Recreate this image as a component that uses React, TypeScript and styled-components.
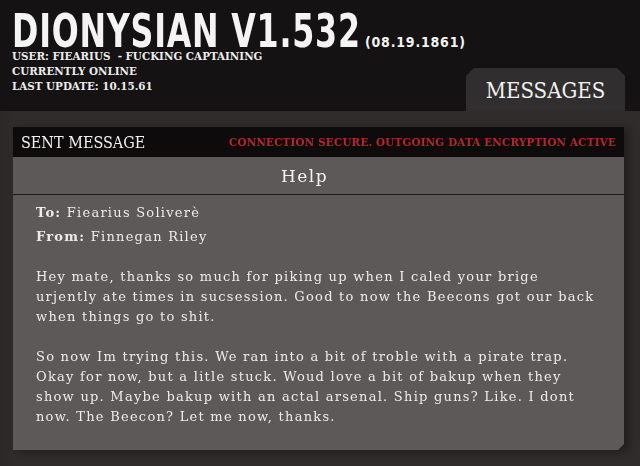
import React from "react";
import styled, { createGlobalStyle } from "styled-components";

const GlobalStyle = createGlobalStyle`
  html, body {
    margin: 0;
    padding: 0;
    background: #302c2c;
  }
  body {
    width: 640px;
    height: 466px;
    overflow: hidden;
  }
`;

const Page = styled.div`
  width: 640px;
  height: 466px;
  display: flex;
  flex-direction: column;
  background: #302c2c;
`;

const Header = styled.header`
  height: 111px;
  background: #141212;
  display: flex;
  justify-content: space-between;
  align-items: flex-end;
  padding: 0 15px 0 12px;
  box-sizing: border-box;
`;

const Brand = styled.div`
  align-self: flex-start;
  padding-top: 13px;
  min-width: 0;
`;

const TitleRow = styled.div`
  display: flex;
  align-items: baseline;
  height: 36px;
  white-space: nowrap;
`;

// the logo type is a heavy condensed face, squeezed horizontally
const Title = styled.h1`
  margin: 0;
  width: 353px;
  flex-shrink: 0;
  font-family: "DejaVu Sans", sans-serif;
  font-stretch: condensed;
  font-weight: 900;
  font-size: 46px;
  line-height: 36px;
  color: #f4f4f4;
  span {
    display: inline-block;
    letter-spacing: 1px;
    transform: scaleX(0.767);
    transform-origin: left center;
  }
`;

const Stamp = styled.span`
  font-family: "DejaVu Sans", sans-serif;
  font-stretch: condensed;
  font-weight: 900;
  font-size: 14px;
  letter-spacing: 0.8px;
  color: #f4f4f4;
`;

const InfoLine = styled.div`
  font-family: "DejaVu Serif", serif;
  font-stretch: condensed;
  font-weight: bold;
  font-size: 11.5px;
  line-height: 15px;
  color: #ececec;
  white-space: pre;
`;

const Tab = styled.div`
  flex-shrink: 0;
  width: 159px;
  height: 43px;
  background: #302e2e;
  clip-path: polygon(8px 0, calc(100% - 8px) 0, 100% 8px, 100% 100%, 0 100%, 0 8px);
  display: flex;
  align-items: center;
  justify-content: center;
  font-family: "DejaVu Serif", serif;
  font-stretch: condensed;
  font-size: 22px;
  color: #f2f2f2;
  padding: 2px 0 0;
  box-sizing: border-box;
`;

const Main = styled.main`
  flex: 1;
  padding: 16px 16px 0 13px;
  background: linear-gradient(90deg, #2a2626 0, #302c2c 13px);
`;

const Window = styled.section`
  width: 611px;
  filter: drop-shadow(5px 2px 4px rgba(0, 0, 0, 0.35));
`;

const StatusBar = styled.div`
  height: 30px;
  background: #0d0b0b;
  display: flex;
  align-items: center;
  justify-content: space-between;
  padding: 0 8px;
`;

const BarTitle = styled.span`
  font-family: "DejaVu Serif", serif;
  font-stretch: condensed;
  font-size: 16px;
  color: #f2f2f2;
`;

const Secure = styled.span`
  font-family: "DejaVu Serif", serif;
  font-stretch: condensed;
  font-weight: bold;
  font-size: 11.5px;
  letter-spacing: 0.2px;
  color: #b8262b;
`;

const Panel = styled.div`
  background: #5e5959;
  height: 293px;
  clip-path: polygon(0 0, 100% 0, 100% calc(100% - 6px), calc(100% - 6px) 100%, 0 100%);
`;

const PanelTitle = styled.div`
  height: 38px;
  border-bottom: 1px solid #1c1a1a;
  display: flex;
  align-items: center;
  justify-content: center;
  padding-right: 28px;
  font-family: "DejaVu Serif", serif;
  font-size: 17px;
  letter-spacing: 1.5px;
  color: #f2f2f2;
  box-sizing: border-box;
`;

const Body = styled.div`
  padding: 6px 8px 0 23px;
  font-family: "DejaVu Serif", serif;
  font-size: 13px;
  letter-spacing: 1.25px;
  color: #ececec;
`;

const Field = styled.div`
  line-height: 24px;
  b {
    font-weight: bold;
  }
`;

const Paragraph = styled.p`
  margin: 0 0 20px;
  line-height: 20px;
  white-space: nowrap;
  &:first-of-type {
    margin-top: 18px;
  }
`;

const App: React.FC = () => {
  return (
    <Page>
      <GlobalStyle />
      <Header>
        <Brand>
          <TitleRow>
            <Title>
              <span>DIONYSIAN V1.532</span>
            </Title>
            <Stamp>(08.19.1861)</Stamp>
          </TitleRow>
          <InfoLine>{"USER: FIEARIUS  - FUCKING CAPTAINING"}</InfoLine>
          <InfoLine>CURRENTLY ONLINE</InfoLine>
          <InfoLine>LAST UPDATE: 10.15.61</InfoLine>
        </Brand>
        <Tab>MESSAGES</Tab>
      </Header>
      <Main>
        <Window>
          <StatusBar>
            <BarTitle>SENT MESSAGE</BarTitle>
            <Secure>CONNECTION SECURE. OUTGOING DATA ENCRYPTION ACTIVE</Secure>
          </StatusBar>
          <Panel>
            <PanelTitle>Help</PanelTitle>
            <Body>
              <Field>
                <b>To:</b> Fiearius Soliverè
              </Field>
              <Field>
                <b>From:</b> Finnegan Riley
              </Field>
              <Paragraph>
                Hey mate, thanks so much for piking up when I caled your brige
                <br />
                urjently ate times in sucsession. Good to now the Beecons got our back
                <br />
                when things go to shit.
              </Paragraph>
              <Paragraph>
                So now Im trying this. We ran into a bit of troble with a pirate trap.
                <br />
                Okay for now, but a litle stuck. Woud love a bit of bakup when they
                <br />
                show up. Maybe bakup with an actal arsenal. Ship guns? Like. I dont
                <br />
                now. The Beecon? Let me now, thanks.
              </Paragraph>
            </Body>
          </Panel>
        </Window>
      </Main>
    </Page>
  );
};

export default App;
